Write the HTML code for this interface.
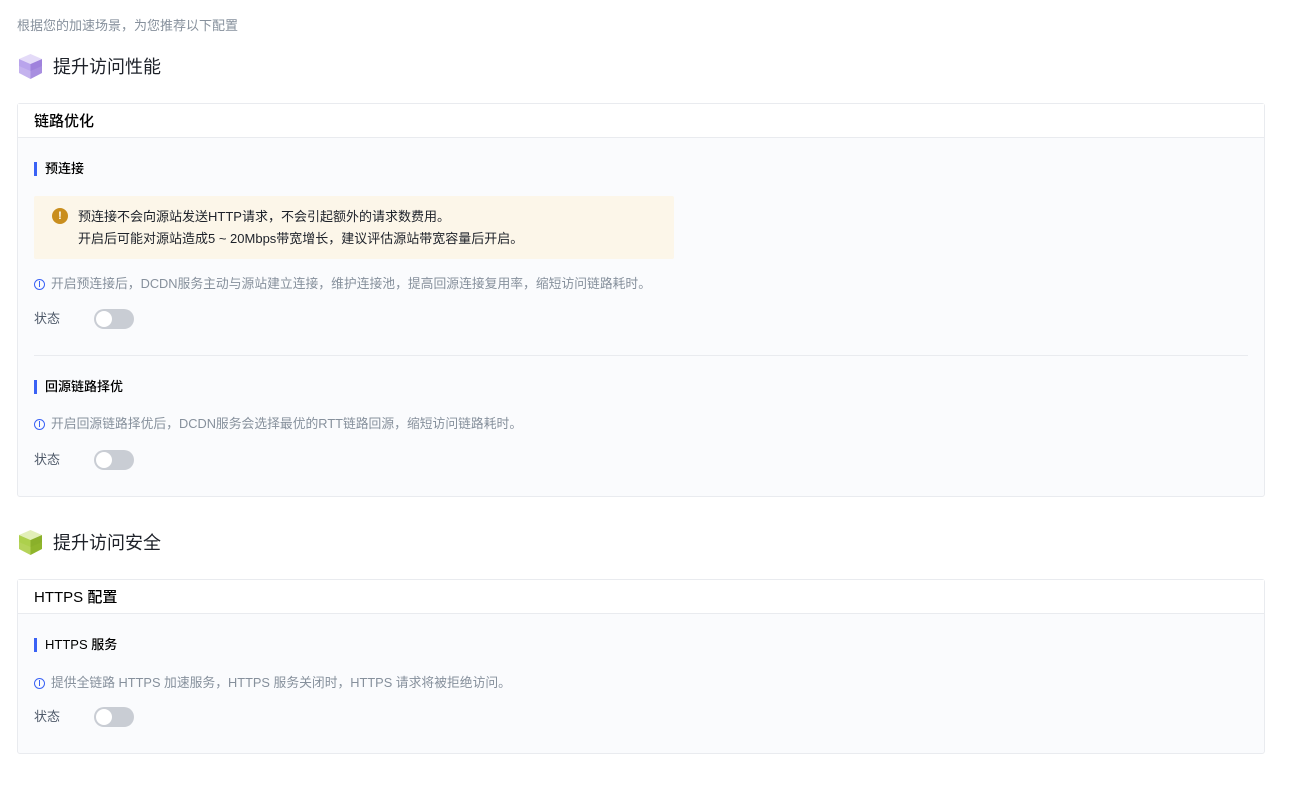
<!DOCTYPE html>
<html><head><meta charset="utf-8"><style>
*{margin:0;padding:0;box-sizing:border-box}
body{width:1299px;height:791px;background:#fff;font-family:"Liberation Sans","Noto Sans CJK SC",sans-serif;position:relative;overflow:hidden;color:#1d2129}
.a{position:absolute;white-space:nowrap;line-height:1}
.sub{font-size:13px;color:#86909c}
.h{font-size:18px;color:#1d2129}
.card{position:absolute;left:17px;width:1248px;border:1px solid #e9ebef;border-radius:3px;background:#fafbfd}
.ch{height:34px;background:#fff;border-bottom:1px solid #e9ebef;font-size:15px;font-weight:500;padding:10px 0 0 16px;line-height:1;color:#000}
.st{font-size:13px;font-weight:500;padding-left:8px;border-left:3px solid #3a62f5;line-height:14px;color:#000}
.info{font-size:12.8px;color:#86909c;display:flex;align-items:center}
.info i{display:inline-block;width:11px;height:11px;border:1.2px solid #3a62f5;border-radius:50%;margin-right:6px;position:relative}
.info i:after{content:"";position:absolute;left:3.5px;top:3.5px;width:1.4px;height:4px;background:#3a62f5}
.info i:before{content:"";position:absolute;left:3.5px;top:1.5px;width:1.4px;height:1.2px;background:#3a62f5}
.lab{font-size:13px;color:#4e5969}
.tg{width:40px;height:20px;border-radius:10px;background:#c9cdd4}
.tg:after{content:"";position:absolute;left:2px;top:2px;width:16px;height:16px;border-radius:50%;background:#fff}
</style></head><body>
<div class="a sub" style="left:17px;top:19px">根据您的加速场景，为您推荐以下配置</div>
<svg class="a" style="left:18px;top:53px" width="25" height="28" viewBox="0 0 25 28">
<polygon points="12.5,13 24,8 24,20 12.5,26" fill="#a88ee0"/><polygon points="12.5,13 1,8 1,20 12.5,26" fill="#c4b2ee"/>
<polygon points="12.5,1 24,6 12.5,11 1,6" fill="#e4dbf8"/><polygon points="12.5,11 24,6 24,13 12.5,18" fill="#9f82dc"/><polygon points="12.5,11 1,6 1,13 12.5,18" fill="#b9a4ec"/></svg>
<div class="a h" style="left:53px;top:58px">提升访问性能</div>
<div class="card" style="top:103px;height:394px">
<div class="ch">链路优化</div>
<div class="a st" style="left:16px;top:58px">预连接</div>
<div class="a" style="left:16px;top:92px;width:640px;height:63px;background:#fcf6e9;border-radius:2px">
<div class="a" style="left:18px;top:12px;width:16px;height:16px;border-radius:50%;background:#c98e1e;color:#fff;font-size:11px;font-weight:bold;text-align:center;line-height:16px">!</div>
<div class="a" style="left:44px;top:10px;font-size:13px;color:#1d2129;line-height:22px">预连接不会向源站发送HTTP请求，不会引起额外的请求数费用。<br>开启后可能对源站造成5 ~ 20Mbps带宽增长，建议评估源站带宽容量后开启。</div></div>
<div class="a info" style="left:16px;top:174px"><i></i>开启预连接后，DCDN服务主动与源站建立连接，维护连接池，提高回源连接复用率，缩短访问链路耗时。</div>
<div class="a lab" style="left:16px;top:208px">状态</div>
<div class="a tg" style="left:76px;top:205px"></div>
<div class="a" style="left:16px;top:251px;width:1214px;height:1px;background:#e9ebef"></div>
<div class="a st" style="left:16px;top:276px">回源链路择优</div>
<div class="a info" style="left:16px;top:314px"><i></i>开启回源链路择优后，DCDN服务会选择最优的RTT链路回源，缩短访问链路耗时。</div>
<div class="a lab" style="left:16px;top:349px">状态</div>
<div class="a tg" style="left:76px;top:346px"></div>
</div>
<svg class="a" style="left:18px;top:529px" width="25" height="28" viewBox="0 0 25 28">
<polygon points="12.5,13 24,8 24,20 12.5,26" fill="#8fb52c"/><polygon points="12.5,13 1,8 1,20 12.5,26" fill="#b5d35a"/>
<polygon points="12.5,1 24,6 12.5,11 1,6" fill="#e2efb8"/><polygon points="12.5,11 24,6 24,13 12.5,18" fill="#8ab02a"/><polygon points="12.5,11 1,6 1,13 12.5,18" fill="#add04c"/></svg>
<div class="a h" style="left:53px;top:534px">提升访问安全</div>
<div class="card" style="top:579px;height:175px">
<div class="ch">HTTPS 配置</div>
<div class="a st" style="left:16px;top:58px">HTTPS 服务</div>
<div class="a info" style="left:16px;top:97px"><i></i>提供全链路 HTTPS 加速服务，HTTPS 服务关闭时，HTTPS 请求将被拒绝访问。</div>
<div class="a lab" style="left:16px;top:130px">状态</div>
<div class="a tg" style="left:76px;top:127px"></div>
</div>
</body></html>
